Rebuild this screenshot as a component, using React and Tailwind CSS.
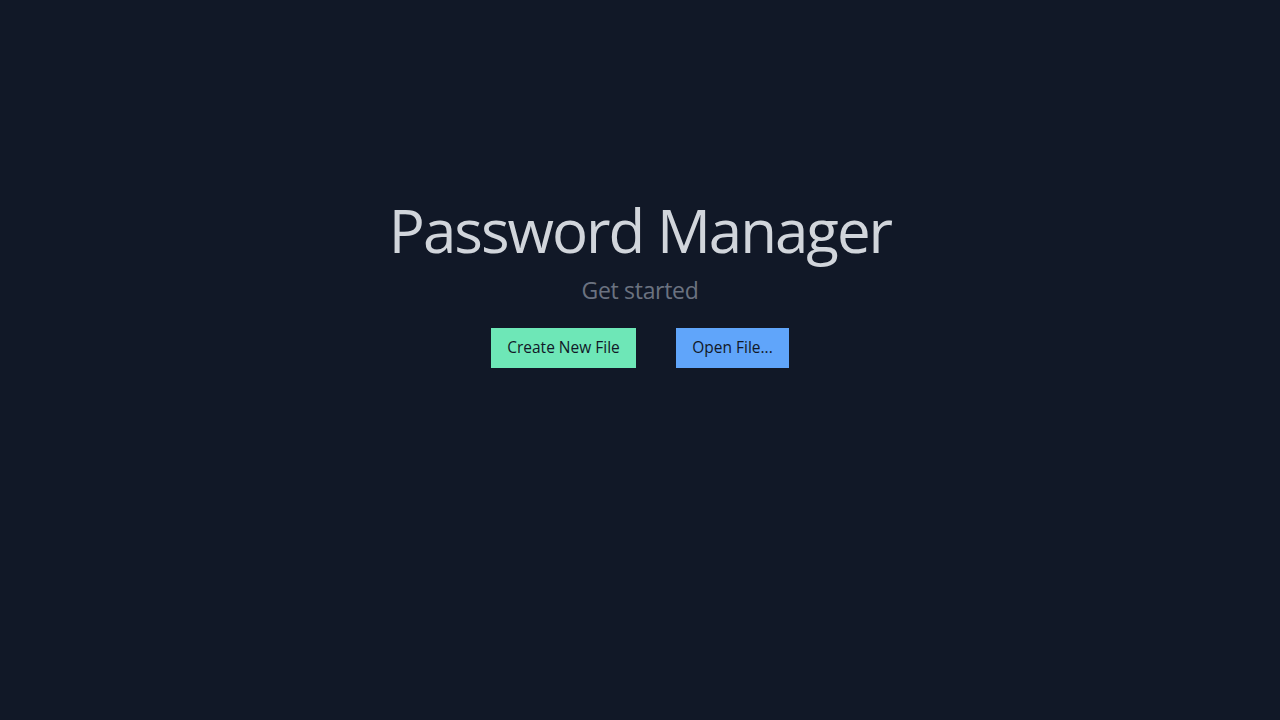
export default function App() {
    return (
        <div className="min-h-screen bg-[#111827] flex flex-col items-center pt-[194px]" style={{ fontFamily: '"Open Sans", "Noto Sans", sans-serif' }}>
            <h1 className="text-6xl leading-[72px] text-[#d1d5db] tracking-[-2px]">Password Manager</h1>
            <p className="text-[23px] leading-8 text-[#6b7280] mt-[8px] tracking-[-0.3px]">Get started</p>
            <div className="flex gap-10 mt-[22px]">
                <button type="button" className="bg-[#6ee7b7] text-[#111827] h-10 text-[15.5px] w-[145px] flex items-center justify-center whitespace-nowrap">
                    Create New File
                </button>
                <button type="button" className="bg-[#60a5fa] text-[#111827] h-10 text-[15.5px] w-[113px] flex items-center justify-center whitespace-nowrap">
                    Open File...
                </button>
            </div>
        </div>
    );
}
